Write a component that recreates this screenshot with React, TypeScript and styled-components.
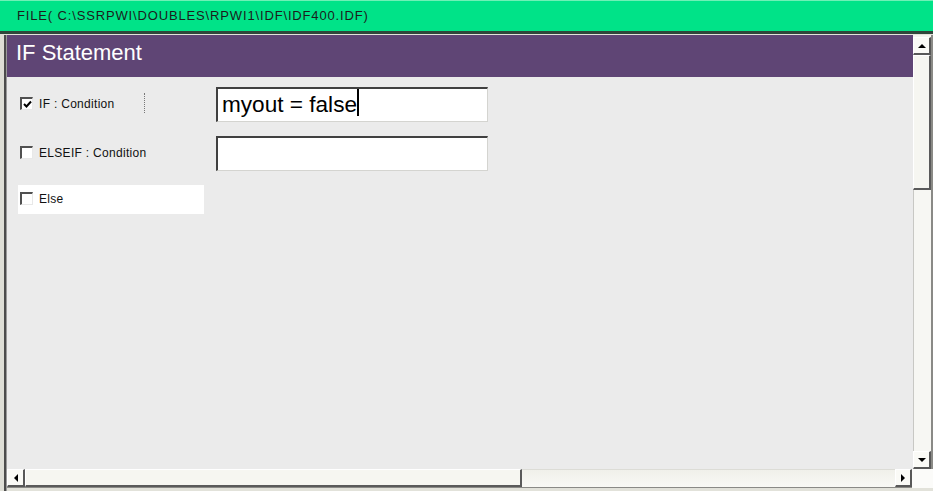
import React from "react";
import styled, { createGlobalStyle } from "styled-components";

const GlobalStyle = createGlobalStyle`
  html, body { margin: 0; padding: 0; background: #e4e4dc; }
  body { font-family: "Liberation Sans", Arial, sans-serif; overflow: hidden; }
`;

const Window = styled.div`
  width: 933px;
  height: 491px;
  display: flex;
  flex-direction: column;
  background: #e2e2da;
  overflow: hidden;
`;

const TopBar = styled.div`
  height: 30px;
  border-top: 1px solid #6ff0b6;
  border-bottom: 3px solid #2f463b;
  background: #00e388;
  color: #1c1c1c;
  font-size: 13px;
  letter-spacing: 0.85px;
  line-height: 30px;
  padding-left: 17px;
  white-space: nowrap;
`;

const Body = styled.div`
  flex: 1;
  display: flex;
  padding-top: 1px;
  min-height: 0;
`;

const LeftEdge = styled.div`
  width: 7px;
  background: linear-gradient(to right, #deded6 0 4px, #4c4c4c 4px 6px, #9a9a9a 6px 7px);
`;

const Main = styled.div`
  flex: 1;
  display: flex;
  flex-direction: column;
  min-width: 0;
`;

const Upper = styled.div`
  flex: 1;
  display: flex;
  min-height: 0;
`;

const Pane = styled.div`
  flex: 1;
  display: flex;
  flex-direction: column;
  min-width: 0;
`;

const Header = styled.div`
  height: 42px;
  background: #5f4575;
  color: #ffffff;
  font-size: 22px;
  line-height: 36px;
  padding-left: 9px;
`;

const Content = styled.div`
  flex: 1;
  background: #ebebeb;
  padding: 10px 0 0 11px;
  display: flex;
  flex-direction: column;
  gap: 14px;
`;

const Row = styled.div<{ $h: number }>`
  display: flex;
  align-items: center;
  gap: 12px;
  height: ${(p) => p.$h}px;
`;

const LabelCell = styled.div<{ $white?: boolean }>`
  width: 186px;
  height: 29px;
  box-sizing: border-box;
  display: flex;
  align-items: center;
  gap: 6px;
  padding-left: 2px;
  background: ${(p) => (p.$white ? "#ffffff" : "transparent")};
`;

const Box = styled.span`
  width: 13px;
  height: 13px;
  box-sizing: border-box;
  background: #ffffff;
  border-style: solid;
  border-width: 2px 1px 1px 2px;
  border-color: #505050 #e8e8e8 #e8e8e8 #505050;
  display: inline-flex;
  align-items: center;
  justify-content: center;
  margin-top: -2px;
`;

const LabelText = styled.span`
  width: 99px;
  font-size: 12px;
  letter-spacing: 0.3px;
  color: #111;
  white-space: nowrap;
  margin-top: -1px;
`;

const Divider = styled.span`
  width: 0;
  height: 20px;
  border-left: 1px dotted #777;
  margin-top: -3px;
`;

const TextBox = styled.div`
  width: 272px;
  height: 35px;
  box-sizing: border-box;
  background: #ffffff;
  border-style: solid;
  border-width: 2px 1px 1px 2px;
  border-color: #404040 #d4d4d0 #d4d4d0 #404040;
  font-size: 22.6px;
  line-height: 32px;
  padding-left: 4px;
  color: #000;
  white-space: nowrap;
`;

const Caret = styled.span`
  display: inline-block;
  width: 2px;
  height: 27px;
  background: #000;
  vertical-align: -4px;
`;

const VScroll = styled.div`
  width: 18px;
  display: flex;
  flex-direction: column;
  background: #f4f4ef;
  border-right: 2px solid #8a8a86;
  padding-top: 2px;
`;

const ArrowButton = styled.div<{ $w?: number; $h?: number }>`
  width: ${(p) => (p.$w ? `${p.$w}px` : "auto")};
  height: ${(p) => (p.$h ? `${p.$h}px` : "auto")};
  flex: none;
  box-sizing: border-box;
  background: #fafaf6;
  border-style: solid;
  border-width: 1px 2px 2px 1px;
  border-color: #ffffff #585858 #585858 #ffffff;
  display: flex;
  align-items: center;
  justify-content: center;
`;

const Tri = styled.span<{ $dir: "up" | "down" | "left" | "right" }>`
  width: 0;
  height: 0;
  border-style: solid;
  border-color: transparent;
  ${(p) =>
    p.$dir === "up"
      ? "border-width: 0 4px 4px 4px; border-bottom-color: #000;"
      : p.$dir === "down"
      ? "border-width: 4px 4px 0 4px; border-top-color: #000;"
      : p.$dir === "left"
      ? "border-width: 4px 4px 4px 0; border-right-color: #000;"
      : "border-width: 4px 0 4px 4px; border-left-color: #000;"}
`;

const VThumb = styled.div`
  height: 135px;
  flex: none;
  box-sizing: border-box;
  background: #f6f6f1;
  border-style: solid;
  border-width: 1px 2px 2px 1px;
  border-color: #ffffff #5a5a5a #5a5a5a #ffffff;
`;

const VTrack = styled.div`
  flex: 1;
  background: #f7f7f3;
  border-left: 1px solid #c8c8c4;
`;

const Lower = styled.div`
  height: 19px;
  display: flex;
  margin-bottom: 3px;
`;

const HScroll = styled.div`
  flex: 1;
  display: flex;
  background: #f4f4ef;
  border-bottom: 1px solid #8a8a86;
`;

const HThumb = styled.div`
  width: 497px;
  flex: none;
  box-sizing: border-box;
  background: #f6f6f1;
  border-style: solid;
  border-width: 1px 2px 2px 1px;
  border-color: #ffffff #5a5a5a #5a5a5a #ffffff;
`;

const HTrack = styled.div`
  flex: 1;
  background: linear-gradient(#f0f0ea, #f9f9f5);
  border-top: 1px solid #dcdcd6;
`;

const Corner = styled.div`
  width: 21px;
  background: #fbfbf9;
`;

const Check = () => (
  <svg width="9" height="9" viewBox="0 0 9 9">
    <path d="M1 4 L3.5 6.5 L8 1.5" stroke="#000" strokeWidth="2" fill="none" />
  </svg>
);

export default function App() {
  return (
    <>
      <GlobalStyle />
      <Window>
        <TopBar>FILE( C:\SSRPWI\DOUBLES\RPWI1\IDF\IDF400.IDF)</TopBar>
        <Body>
          <LeftEdge />
          <Main>
            <Upper>
              <Pane>
                <Header>IF Statement</Header>
                <Content>
                  <Row $h={35}>
                    <LabelCell>
                      <Box>
                        <Check />
                      </Box>
                      <LabelText>IF : Condition</LabelText>
                      <Divider />
                    </LabelCell>
                    <TextBox>
                      myout = false
                      <Caret />
                    </TextBox>
                  </Row>
                  <Row $h={35}>
                    <LabelCell>
                      <Box />
                      <LabelText>ELSEIF : Condition</LabelText>
                    </LabelCell>
                    <TextBox />
                  </Row>
                  <Row $h={29}>
                    <LabelCell $white>
                      <Box />
                      <LabelText>Else</LabelText>
                    </LabelCell>
                  </Row>
                </Content>
              </Pane>
              <VScroll>
                <ArrowButton $h={18}>
                  <Tri $dir="up" />
                </ArrowButton>
                <VThumb />
                <VTrack />
                <ArrowButton $h={18}>
                  <Tri $dir="down" />
                </ArrowButton>
              </VScroll>
            </Upper>
            <Lower>
              <HScroll>
                <ArrowButton $w={18}>
                  <Tri $dir="left" />
                </ArrowButton>
                <HThumb />
                <HTrack />
                <ArrowButton $w={17}>
                  <Tri $dir="right" />
                </ArrowButton>
              </HScroll>
              <Corner />
            </Lower>
          </Main>
        </Body>
      </Window>
    </>
  );
}
